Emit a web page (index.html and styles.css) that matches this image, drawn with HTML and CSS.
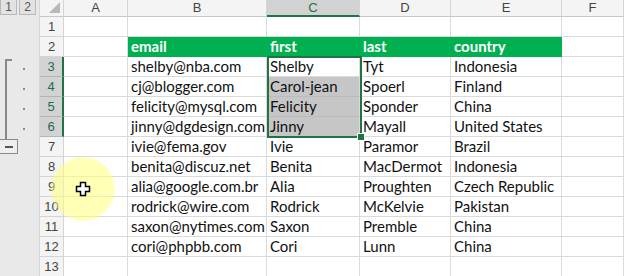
FILE: index.html
```html
<!DOCTYPE html>
<html lang="en">
<head>
    <meta charset="UTF-8">
    <title>Sheet</title>
    <link rel="stylesheet" href="styles.css">
</head>
<body>

    <div class="screen">
        <div class="outline">
            <div class="levels">
                <span class="level">1</span>
                <span class="level">2</span>
            </div>
            <div class="group">
                <div class="bracket"></div>
                <div class="dots">
                    <span class="dot"></span>
                    <span class="dot"></span>
                    <span class="dot"></span>
                    <span class="dot"></span>
                </div>
            </div>
            <div class="collapse"><span class="minus"></span></div>
        </div>

        <div class="sheet" id="sheet">
            <div class="corner"><span class="tri"></span></div>
            <div class="colhead">A</div>
            <div class="colhead">B</div>
            <div class="colhead sel">C</div>
            <div class="colhead">D</div>
            <div class="colhead">E</div>
            <div class="colhead">F</div>
        </div>

        <div class="selection"><span class="handle"></span></div>
        <div class="spot">
            <svg width="16" height="16" viewBox="0 0 16 16">
                <path d="M5.5 1.5h5v4h4v5h-4v4h-5v-4h-4v-5h4z" fill="#fff" stroke="#000" stroke-width="1.5"/>
            </svg>
        </div>
    </div>

    <script>
        const rows = [
            ['', '', '', '', ''],
            ['email', 'first', 'last', 'country', ''],
            ['shelby@nba.com', 'Shelby', 'Tyt', 'Indonesia', ''],
            ['cj@blogger.com', 'Carol-jean', 'Spoerl', 'Finland', ''],
            ['felicity@mysql.com', 'Felicity', 'Sponder', 'China', ''],
            ['jinny@dgdesign.com', 'Jinny', 'Mayall', 'United States', ''],
            ['ivie@fema.gov', 'Ivie', 'Paramor', 'Brazil', ''],
            ['benita@discuz.net', 'Benita', 'MacDermot', 'Indonesia', ''],
            ['alia@google.com.br', 'Alia', 'Proughten', 'Czech Republic', ''],
            ['rodrick@wire.com', 'Rodrick', 'McKelvie', 'Pakistan', ''],
            ['saxon@nytimes.com', 'Saxon', 'Premble', 'China', ''],
            ['cori@phpbb.com', 'Cori', 'Lunn', 'China', ''],
            ['', '', '', '', '']
        ];

        const sheet = document.getElementById('sheet');

        rows.forEach((cells, i) => {
            const n = i + 1;
            const picked = n >= 3 && n <= 6;
            let html = `<div class="rowhead${picked ? ' sel' : ''}">${n}</div><div class="cell"></div>`;
            cells.forEach((text, c) => {
                let cls = 'cell';
                if (n === 2 && c < 4) cls += ' title';
                if (c === 1 && n >= 4 && n <= 6) cls += ' shade';
                html += `<div class="${cls}">${text}</div>`;
            });
            sheet.insertAdjacentHTML('beforeend', html);
        });
    </script>

</body>
</html>
```

FILE: styles.css
```css
body {
    margin: 0;
    background-color: #fff;
    font-family: Lato, "Open Sans", sans-serif;
    overflow: hidden;
}

.screen {
    display: flex;
    position: relative;
    width: 624px;
    height: 276px;
    overflow: hidden;
}

/* barra de agrupamento a esquerda */
.outline {
    width: 40px;
    flex-shrink: 0;
    background-color: #e9e9e9;
    border-right: 1px solid #d6d6d6;
    box-sizing: border-box;
}

.levels {
    display: flex;
    gap: 2px;
    height: 15px;
}

.level {
    width: 17px;
    height: 15px;
    box-sizing: border-box;
    border: 1px solid #b9b9b9;
    border-top: none;
    background-color: #e2e2e2;
    color: #555;
    font-family: "Liberation Sans", sans-serif;
    font-size: 12px;
    line-height: 14px;
    text-align: center;
}

.group {
    display: flex;
    margin-top: 44px;
    height: 80px;
}

.bracket {
    width: 5px;
    margin-left: 5px;
    border-left: 2px solid #8a8a8a;
    border-top: 2px solid #8a8a8a;
    height: 79px;
}

.dots {
    display: flex;
    flex-direction: column;
    margin-left: 11px;
}

.dot {
    width: 2px;
    height: 2px;
    margin: 9px 0;
    background-color: #8a8a8a;
}

.collapse {
    display: flex;
    align-items: center;
    justify-content: center;
    width: 18px;
    height: 15px;
    box-sizing: border-box;
    border: 1px solid #8a8a8a;
    border-left: none;
    background-color: #eee;
}

.minus {
    width: 8px;
    height: 2px;
    background-color: #555;
}

/* grade da planilha */
.sheet {
    flex: 1;
    display: grid;
    grid-template-columns: 24px 64px 139px 93px 91px 111px 1fr;
    grid-template-rows: 17px;
    grid-auto-rows: 20px;
}

.corner, .colhead, .rowhead {
    background-color: #f4f4f4;
    color: #444;
    box-sizing: border-box;
    border-right: 1px solid #d4d4d4;
    border-bottom: 1px solid #c6c6c6;
}

.corner {
    position: relative;
}

.tri {
    position: absolute;
    right: 3px;
    bottom: 3px;
    border-left: 11px solid transparent;
    border-bottom: 11px solid #b8b8b8;
}

.colhead {
    font-family: "Liberation Sans", sans-serif;
    font-size: 13px;
    line-height: 16px;
    text-align: center;
}

.colhead.sel {
    background-color: #d2d2d2;
    color: #217346;
    border-bottom: 2px solid #217346;
}

.rowhead {
    font-family: "Liberation Sans", sans-serif;
    font-size: 13px;
    line-height: 19px;
    text-align: center;
    border-bottom-color: #d4d4d4;
}

.rowhead.sel {
    background-color: #d2d2d2;
    color: #1f6b52;
    border-right: 2px solid #217346;
    border-bottom-color: #b4b4b4;
}

.cell {
    box-sizing: border-box;
    border-right: 1px solid #dadada;
    border-bottom: 1px solid #dadada;
    padding: 0 3px;
    font-size: 15px;
    line-height: 19px;
    color: #111;
    white-space: nowrap;
    overflow: hidden;
}

.title {
    background-color: #00b050;
    color: #fff;
    font-weight: bold;
    border-right-color: #00b050;
    border-bottom-color: #00b050;
}

.shade {
    background-color: #c6c6c6;
    border-bottom-color: #bbb;
}

/* selecao ativa C3:C6 */
.selection {
    position: absolute;
    left: 267px;
    top: 56px;
    width: 95px;
    height: 82px;
    box-sizing: border-box;
    border: 2px solid #217346;
}

.handle {
    position: absolute;
    right: -5px;
    bottom: -5px;
    width: 6px;
    height: 6px;
    background-color: #217346;
    border: 1px solid #fff;
}

/* destaque do cursor */
.spot {
    position: absolute;
    left: 51px;
    top: 157px;
    width: 64px;
    height: 64px;
    border-radius: 50%;
    background: radial-gradient(circle, rgba(255, 255, 120, 0.55) 60%, rgba(255, 255, 120, 0.15) 100%);
    display: flex;
    align-items: center;
    justify-content: center;
}
```
